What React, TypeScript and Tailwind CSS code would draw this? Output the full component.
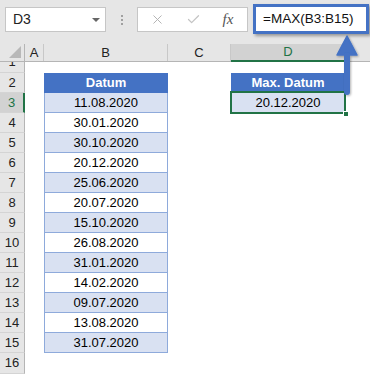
import { X, Check } from "lucide-react";

const dates = [
  "11.08.2020",
  "30.01.2020",
  "30.10.2020",
  "20.12.2020",
  "25.06.2020",
  "20.07.2020",
  "15.10.2020",
  "26.08.2020",
  "31.01.2020",
  "14.02.2020",
  "09.07.2020",
  "13.08.2020",
  "31.07.2020",
];

const font = { fontFamily: '"Liberation Sans", Arial, sans-serif' };

function RowHead({ n, active }: { n: number; active?: boolean }) {
  return (
    <div
      className={
        "w-[25px] h-full shrink-0 flex items-center justify-center text-[13px] border-b border-[#d4d4d4] " +
        (active
          ? "bg-[#d2d2d2] text-[#217346] border-r-2 border-r-[#217346]"
          : "bg-[#e6e6e6] text-[#222] border-r border-r-[#b5b5b5]")
      }
    >
      {n}
    </div>
  );
}

function TableCell({ text, odd, head }: { text: string; odd?: boolean; head?: boolean }) {
  if (head) {
    return (
      <div className="w-full h-full bg-[#4472c4] text-white font-bold text-[13px] flex items-center justify-center">
        {text}
      </div>
    );
  }
  return (
    <div
      className={
        "w-full h-full border-x border-b border-[#8eaadb] text-[13px] text-black flex items-center justify-center " +
        (odd ? "bg-[#d9e1f2]" : "bg-white")
      }
    >
      {text}
    </div>
  );
}

export default function App() {
  return (
    <div className="w-[370px] h-[375px] overflow-hidden bg-white relative" style={font}>
      {/* formula bar */}
      <div className="h-[44px] bg-[#e6e6e6] flex items-start pt-[7px] pl-[5px]">
        <div className="w-[101px] h-[25px] bg-white border border-[#c6c6c6] flex items-center justify-between pl-[7px] pr-[5px]">
          <span className="text-[14px] text-[#222]">D3</span>
          <span className="w-0 h-0 border-x-[4px] border-x-transparent border-t-[4px] border-t-[#666]" />
        </div>
        <div className="w-[31px] h-[25px] flex flex-col items-center justify-center gap-[2px]">
          <span className="w-[2px] h-[2px] bg-[#a0a0a0]" />
          <span className="w-[2px] h-[2px] bg-[#a0a0a0]" />
          <span className="w-[2px] h-[2px] bg-[#a0a0a0]" />
        </div>
        <div className="w-[111px] h-[25px] bg-white border border-[#c6c6c6] flex items-center">
          <div className="w-[38px] flex justify-center">
            <X size={15} strokeWidth={1.5} color="#b0b0b0" />
          </div>
          <div className="w-[34px] flex justify-center">
            <Check size={15} strokeWidth={2} color="#c4c4c4" />
          </div>
          <div className="w-[36px] flex justify-center">
            <span
              className="italic text-[15px] text-[#555]"
              style={{ fontFamily: '"Liberation Serif", serif' }}
            >
              fx
            </span>
          </div>
        </div>
        <div className="ml-[5px] -mt-[3px] w-[116px] h-[30px] bg-white border-[3px] border-[#4472c4] shadow-[2px_2px_3px_rgba(0,0,0,0.35)] flex items-center pl-[7px]">
          <span className="text-[13.5px] text-[#111]">=MAX(B3:B15)</span>
        </div>
      </div>

      {/* column headers */}
      <div className="h-[18px] flex bg-[#e6e6e6] border-b border-[#b5b5b5] text-[13px] text-[#222]">
        <div className="w-[25px] shrink-0 border-r border-[#b5b5b5] relative">
          <svg className="absolute right-[3px] bottom-[3px]" width="12" height="12" viewBox="0 0 12 12">
            <polygon points="12,0 12,12 0,12" fill="#b8b8b8" />
          </svg>
        </div>
        <div className="w-[19px] shrink-0 border-r border-[#c8c8c8] flex items-center justify-center">A</div>
        <div className="w-[124px] shrink-0 border-r border-[#c8c8c8] flex items-center justify-center">B</div>
        <div className="w-[63px] shrink-0 border-r border-[#c8c8c8] flex items-center justify-center">C</div>
        <div className="w-[114px] shrink-0 bg-[#d2d2d2] border-b-2 border-[#217346] text-[#217346] flex items-center justify-center -mb-px">
          D
        </div>
        <div className="flex-1 border-l border-[#c8c8c8]" />
      </div>

      {/* row 1, partly scrolled away */}
      <div className="h-[11px] overflow-hidden flex">
        <div className="w-[25px] h-[11px] overflow-hidden bg-[#e6e6e6] border-r border-[#b5b5b5] border-b border-b-[#d4d4d4]">
          <div className="h-[20px] -mt-[10px] flex items-center justify-center text-[13px] text-[#222]">1</div>
        </div>
      </div>

      {/* row 2: table headers */}
      <div className="h-[20px] flex">
        <RowHead n={2} />
        <div className="w-[19px] shrink-0" />
        <div className="w-[124px] shrink-0">
          <TableCell text="Datum" head />
        </div>
        <div className="w-[63px] shrink-0" />
        <div className="w-[114px] shrink-0">
          <TableCell text="Max. Datum" head />
        </div>
      </div>

      {/* rows 3-15 */}
      {dates.map((d, i) => {
        const row = i + 3;
        return (
          <div key={row} className="h-[20px] flex">
            <RowHead n={row} active={row === 3} />
            <div className="w-[19px] shrink-0" />
            <div className="w-[124px] shrink-0">
              <TableCell text={d} odd={i % 2 === 0} />
            </div>
            <div className="w-[63px] shrink-0" />
            {row === 3 && (
              <div className="w-[114px] shrink-0 relative">
                <TableCell text="20.12.2020" odd />
                <div className="absolute -inset-x-px -top-[2px] -bottom-px border-2 border-[#217346]" />
                <div className="absolute -right-[4px] -bottom-[4px] w-[6px] h-[6px] bg-[#217346] border border-white" />
              </div>
            )}
          </div>
        );
      })}

      {/* row 16 */}
      <div className="h-[21px] flex">
        <RowHead n={16} />
      </div>

      {/* arrow annotation */}
      <svg className="absolute left-[334px] top-[34px]" width="26" height="64" viewBox="0 0 26 64">
        <defs>
          <filter id="sh" x="-30%" y="-10%" width="160%" height="130%">
            <feDropShadow dx="1" dy="1" stdDeviation="0.8" floodColor="#000" floodOpacity="0.3" />
          </filter>
        </defs>
        <g filter="url(#sh)" fill="#4472c4">
          <polygon points="13,2 23,21 3,21" strokeLinejoin="round" stroke="#4472c4" strokeWidth="1.5" />
          <rect x="10" y="18" width="6" height="43" rx="3" />
        </g>
      </svg>
    </div>
  );
}
